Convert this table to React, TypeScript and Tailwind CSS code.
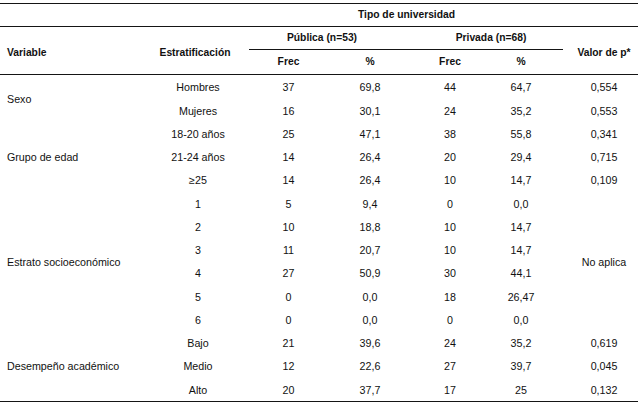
import { Fragment } from "react";

const COLS = "grid-cols-[147px_102px_79px_84px_76px_66px_84px]";

type Row = {
  variable?: { label: string; span: string };
  estrato: string;
  pubFrec: string;
  pubPct: string;
  privFrec: string;
  privPct: string;
  valor?: { label: string; span?: string };
};

const rows: Row[] = [
  { variable: { label: "Sexo", span: "row-span-2" }, estrato: "Hombres", pubFrec: "37", pubPct: "69,8", privFrec: "44", privPct: "64,7", valor: { label: "0,554" } },
  { estrato: "Mujeres", pubFrec: "16", pubPct: "30,1", privFrec: "24", privPct: "35,2", valor: { label: "0,553" } },
  { variable: { label: "Grupo de edad", span: "row-span-3" }, estrato: "18-20 años", pubFrec: "25", pubPct: "47,1", privFrec: "38", privPct: "55,8", valor: { label: "0,341" } },
  { estrato: "21-24 años", pubFrec: "14", pubPct: "26,4", privFrec: "20", privPct: "29,4", valor: { label: "0,715" } },
  { estrato: "≥25", pubFrec: "14", pubPct: "26,4", privFrec: "10", privPct: "14,7", valor: { label: "0,109" } },
  { variable: { label: "Estrato socioeconómico", span: "row-span-6" }, estrato: "1", pubFrec: "5", pubPct: "9,4", privFrec: "0", privPct: "0,0", valor: { label: "No aplica", span: "row-span-6" } },
  { estrato: "2", pubFrec: "10", pubPct: "18,8", privFrec: "10", privPct: "14,7" },
  { estrato: "3", pubFrec: "11", pubPct: "20,7", privFrec: "10", privPct: "14,7" },
  { estrato: "4", pubFrec: "27", pubPct: "50,9", privFrec: "30", privPct: "44,1" },
  { estrato: "5", pubFrec: "0", pubPct: "0,0", privFrec: "18", privPct: "26,47" },
  { estrato: "6", pubFrec: "0", pubPct: "0,0", privFrec: "0", privPct: "0,0" },
  { variable: { label: "Desempeño académico", span: "row-span-3" }, estrato: "Bajo", pubFrec: "21", pubPct: "39,6", privFrec: "24", privPct: "35,2", valor: { label: "0,619" } },
  { estrato: "Medio", pubFrec: "12", pubPct: "22,6", privFrec: "27", privPct: "39,7", valor: { label: "0,045" } },
  { estrato: "Alto", pubFrec: "20", pubPct: "37,7", privFrec: "17", privPct: "25", valor: { label: "0,132" } },
];

const cell = "flex items-center justify-center";

export default function App() {
  return (
    <div
      className="w-[638px] h-[402px] bg-white pt-[3px] text-[#111] text-[10.7px] leading-none"
      style={{ fontFamily: '"Liberation Sans", Arial, sans-serif' }}
    >
      {/* header */}
      <div className={`grid ${COLS} grid-rows-[23px_23px_24px] border-t border-b border-[#151515] font-bold text-[10.3px]`}>
        <div className="col-span-2 border-b border-[#151515]" />
        <div className={`${cell} col-span-4 border-b border-[#151515] pl-[10px]`}>Tipo de universidad</div>
        <div className="border-b border-[#151515]" />

        <div className="row-span-2 flex items-center pl-[7px] pt-[5px]">Variable</div>
        <div className={`${cell} row-span-2 pt-[5px] pr-[6px]`}>Estratificación</div>
        <div className={`${cell} col-span-2 border-b border-[#151515] pr-[17px]`}>Pública (n=53)</div>
        <div className={`${cell} col-span-2 border-b border-[#151515] pl-[7px] mr-[-9px]`}>Privada (n=68)</div>
        <div className={`${cell} row-span-2 pt-[6px] pl-[16px]`}>Valor de p*</div>

        <div className={cell}>Frec</div>
        <div className={cell}>%</div>
        <div className={cell}>Frec</div>
        <div className={cell}>%</div>
      </div>

      {/* body */}
      <div className={`grid ${COLS} grid-rows-[repeat(14,23.25px)] border-b border-[#151515]`}>
        {rows.map((r, i) => (
          <Fragment key={i}>
            {r.variable && (
              <div className={`${r.variable.span} flex items-center pl-[7px] pt-[2px]`}>{r.variable.label}</div>
            )}
            <div className={`${cell} pt-[2px]`}>{r.estrato}</div>
            <div className={`${cell} pt-[2px]`}>{r.pubFrec}</div>
            <div className={`${cell} pt-[2px]`}>{r.pubPct}</div>
            <div className={`${cell} pt-[2px]`}>{r.privFrec}</div>
            <div className={`${cell} pt-[2px]`}>{r.privPct}</div>
            {r.valor && (
              <div className={`${cell} ${r.valor.span ?? ""} pt-[2px] pl-[16px]`}>{r.valor.label}</div>
            )}
          </Fragment>
        ))}
      </div>
    </div>
  );
}
